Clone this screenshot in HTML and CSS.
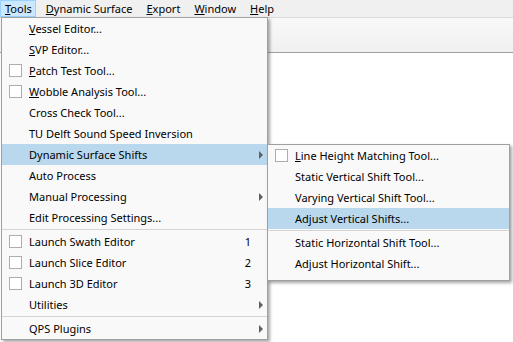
FILE: index.html
```html
<!DOCTYPE html>
<html>
<head>
	<title>Tools menu</title>
	<link rel="stylesheet" href="styles.css">
</head>
<body>
	<div class="menubar">
		<span class="mb-item active"><u>T</u>ools</span>
		<span class="mb-item"><u>D</u>ynamic Surface</span>
		<span class="mb-item"><u>E</u>xport</span>
		<span class="mb-item"><u>W</u>indow</span>
		<span class="mb-item"><u>H</u>elp</span>
	</div>
	<div class="toolbar"></div>
	<div class="workspace"></div>

	<div class="menu main-menu">
		<div class="item"><span class="slot"></span><span class="label"><u>V</u>essel Editor...</span><span class="key"></span><span class="sub"></span></div>
		<div class="item"><span class="slot"></span><span class="label"><u>S</u>VP Editor...</span><span class="key"></span><span class="sub"></span></div>
		<div class="item"><span class="slot"><i class="box"></i></span><span class="label"><u>P</u>atch Test Tool...</span><span class="key"></span><span class="sub"></span></div>
		<div class="item"><span class="slot"><i class="box"></i></span><span class="label"><u>W</u>obble Analysis Tool...</span><span class="key"></span><span class="sub"></span></div>
		<div class="item"><span class="slot"></span><span class="label">Cross Check Tool...</span><span class="key"></span><span class="sub"></span></div>
		<div class="item"><span class="slot"></span><span class="label">TU Delft Sound Speed Inversion</span><span class="key"></span><span class="sub"></span></div>
		<div class="item hover"><span class="slot"></span><span class="label">Dynamic Surface Shifts</span><span class="key"></span><span class="sub"><i class="arrow"></i></span></div>
		<div class="item"><span class="slot"></span><span class="label">Auto Process</span><span class="key"></span><span class="sub"></span></div>
		<div class="item"><span class="slot"></span><span class="label">Manual Processing</span><span class="key"></span><span class="sub"><i class="arrow"></i></span></div>
		<div class="item"><span class="slot"></span><span class="label">Edit Processing Settings...</span><span class="key"></span><span class="sub"></span></div>
		<div class="sep"></div>
		<div class="item"><span class="slot"><i class="box"></i></span><span class="label">Launch Swath Editor</span><span class="key">1</span><span class="sub"></span></div>
		<div class="item"><span class="slot"><i class="box"></i></span><span class="label">Launch Slice Editor</span><span class="key">2</span><span class="sub"></span></div>
		<div class="item"><span class="slot"><i class="box"></i></span><span class="label">Launch 3D Editor</span><span class="key">3</span><span class="sub"></span></div>
		<div class="item"><span class="slot"></span><span class="label">Utilities</span><span class="key"></span><span class="sub"><i class="arrow"></i></span></div>
		<div class="sep"></div>
		<div class="item"><span class="slot"></span><span class="label">QPS Plugins</span><span class="key"></span><span class="sub"><i class="arrow"></i></span></div>
	</div>

	<div class="menu submenu">
		<div class="item"><span class="slot"><i class="box"></i></span><span class="label"><u>L</u>ine Height Matching Tool...</span></div>
		<div class="item"><span class="slot"></span><span class="label">Static Vertical Shift Tool...</span></div>
		<div class="item"><span class="slot"></span><span class="label">Varying Vertical Shift Tool...</span></div>
		<div class="item hover"><span class="slot"></span><span class="label">Adjust Vertical Shifts...</span></div>
		<div class="sep"></div>
		<div class="item"><span class="slot"></span><span class="label">Static Horizontal Shift Tool...</span></div>
		<div class="item"><span class="slot"></span><span class="label">Adjust Horizontal Shift...</span></div>
	</div>
</body>
</html>
```

FILE: styles.css
```css
html, body {
	margin: 0;
	padding: 0;
}

body {
	width: 513px;
	height: 342px;
	overflow: hidden;
	position: relative;
	background: #fff;
	color: #000;
	font-family: "Noto Sans", sans-serif;
	font-size: 11px;
}

u {
	text-decoration: underline;
	text-underline-offset: 1px;
}

.menubar {
	display: flex;
	height: 17px;
	background: #f0f0f0;
	border-bottom: 1px solid #dadada;
}

.mb-item {
	padding: 0 3px 0 4px;
	margin-right: 5px;
	line-height: 15px;
	border: 1px solid transparent;
	white-space: nowrap;
}

.mb-item.active {
	background: #cce8ff;
	border-color: #99d1ff;
}

.toolbar {
	height: 34px;
	background: linear-gradient(#f9f9f9, #f0f0f0);
	border-bottom: 1px solid #a0a0a0;
}

.menu {
	position: absolute;
	box-sizing: border-box;
	background: #f9f9f9;
	border: 1px solid #a0a0a0;
	box-shadow: 2px 2px 3px rgba(0, 0, 0, 0.35);
}

.main-menu {
	left: 1px;
	top: 17px;
	width: 267px;
}

.submenu {
	left: 267px;
	top: 144px;
	width: 243px;
	padding-bottom: 6px;
}

.item {
	display: flex;
	align-items: center;
	height: 21px;
	white-space: nowrap;
}

.item.hover {
	background: #b9d8ed;
}

.slot {
	width: 27px;
	flex: none;
	display: flex;
	align-items: center;
}

.box {
	width: 13px;
	height: 13px;
	box-sizing: border-box;
	margin-left: 7px;
	border: 1px solid #adadad;
	background: #fff;
}

.label {
	flex: 1;
}

.key {
	flex: none;
}

.sub {
	width: 16px;
	flex: none;
	display: flex;
	align-items: center;
}

.arrow {
	margin-left: 8px;
	width: 0;
	height: 0;
	border-left: 4px solid #606060;
	border-top: 4px solid transparent;
	border-bottom: 4px solid transparent;
}

.sep {
	height: 1px;
	margin: 1px 0;
	background: #d5d5d5;
}
```
